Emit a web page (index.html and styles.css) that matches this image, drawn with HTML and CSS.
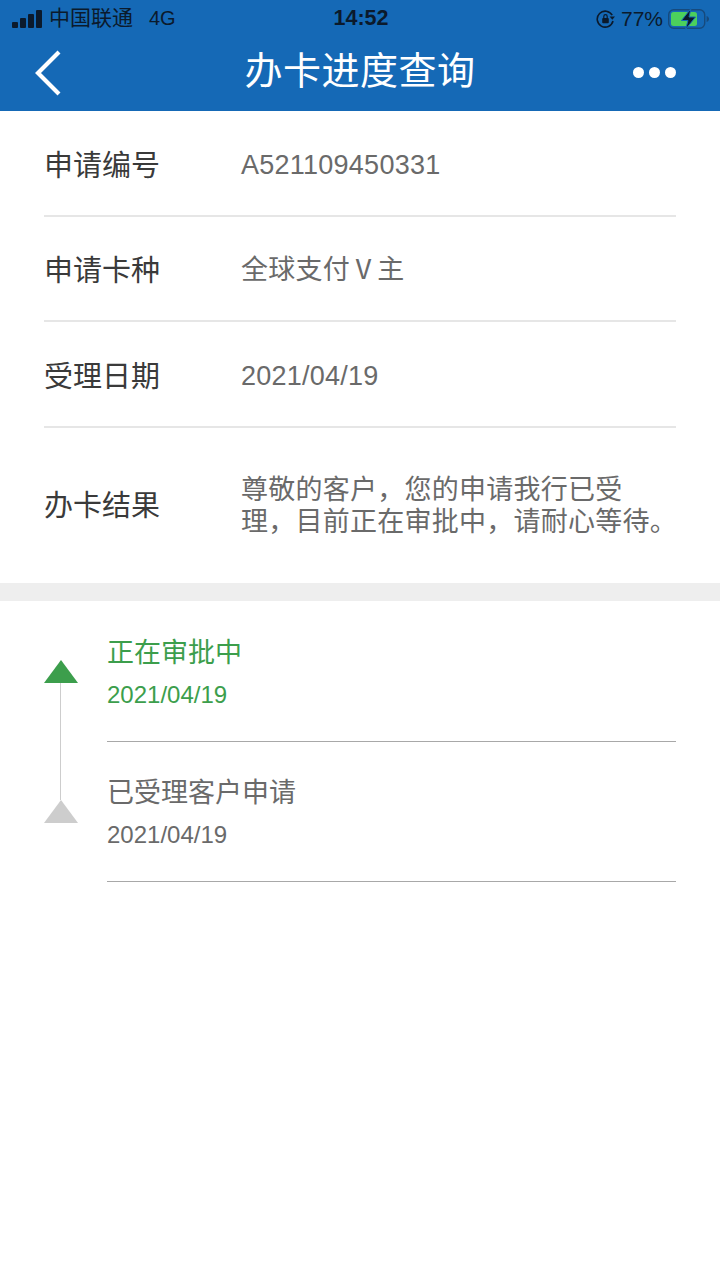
FILE: index.html
```html
<!DOCTYPE html>
<html lang="zh-CN">
<head>
  <meta charset="UTF-8">
  <title>办卡进度查询</title>
  <link rel="stylesheet" href="styles.css">
</head>
<body>

  <header class="topbar">
    <div class="status">
      <div class="status-left">
        <span class="signal"><i></i><i></i><i></i><i></i></span>
        <span class="carrier">中国联通</span>
        <span class="network">4G</span>
      </div>
      <div class="status-time">14:52</div>
      <div class="status-right">
        <svg class="lock-icon" width="20" height="20" viewBox="0 0 20 20">
          <path d="M16.2 6.2A8 8 0 1 0 17 12" fill="none" stroke="#0b1a2c" stroke-width="1.6"/>
          <path d="M13.6 7.4h5.4l-2.7 3.4z" fill="#0b1a2c"/>
          <rect x="6.2" y="9" width="6.6" height="5.2" rx="1" fill="#0b1a2c"/>
          <path d="M7.8 9V7.4a1.7 1.7 0 0 1 3.4 0V9" fill="none" stroke="#0b1a2c" stroke-width="1.2"/>
        </svg>
        <span class="percent">77%</span>
        <svg class="battery" width="42" height="22" viewBox="0 0 42 22">
          <rect x="0.7" y="1.7" width="36" height="18.6" rx="5" fill="none" stroke="#164a7d" stroke-width="1.4"/>
          <rect x="3" y="4" width="26" height="14" rx="2.5" fill="#4cd05c"/>
          <path d="M38.6 8v6c1.6-.6 2.4-1.6 2.4-3s-.8-2.400-2.400-3z" fill="#164a7d"/>
          <path d="M23 0.500 13.500 12.500h6.500l-2.500 9 10-12.500h-6.500z" fill="#0b1a2c" stroke="#1569b6" stroke-width="1"/>
        </svg>
      </div>
    </div>
    <nav class="navbar">
      <svg class="back-icon" width="30" height="48" viewBox="0 0 30 48">
        <path d="M26 3 5 24l21 21" fill="none" stroke="#fff" stroke-width="4.200"/>
      </svg>
      <h1>办卡进度查询</h1>
      <div class="more"><i></i><i></i><i></i></div>
    </nav>
  </header>

  <section class="info">
    <div class="info-row">
      <div class="info-label">申请编号</div>
      <div class="info-value">A521109450331</div>
    </div>
    <div class="info-row">
      <div class="info-label">申请卡种</div>
      <div class="info-value">全球支付Ⅴ主</div>
    </div>
    <div class="info-row">
      <div class="info-label">受理日期</div>
      <div class="info-value">2021/04/19</div>
    </div>
    <div class="info-row info-row-result">
      <div class="info-label">办卡结果</div>
      <div class="info-value">尊敬的客户，您的申请我行已受<br>理，目前正在审批中，请耐心等待。</div>
    </div>
  </section>

  <div class="band"></div>

  <section class="timeline">
    <div class="rail">
      <span class="arrow arrow-green"></span>
      <span class="rail-line"></span>
      <span class="arrow arrow-grey"></span>
    </div>
    <div class="steps">
      <div class="step step-current">
        <div class="step-title">正在审批中</div>
        <div class="step-date">2021/04/19</div>
      </div>
      <div class="step">
        <div class="step-title">已受理客户申请</div>
        <div class="step-date">2021/04/19</div>
      </div>
    </div>
  </section>

</body>
</html>
```

FILE: styles.css
```css
body {
  margin: 0;
  background: #fff;
  font-family: "Liberation Sans", "Noto Sans CJK SC", sans-serif;
  color: #6a6a6a;
}

.topbar {
  height: 111px;
  background-color: #1569b6;
}

.status {
  display: flex;
  align-items: center;
  justify-content: space-between;
  height: 37px;
  padding: 0 10px 0 12px;
  color: #0b1a2c;
}

.status-left,
.status-right {
  display: flex;
  align-items: center;
  width: 200px;
}

.status-right {
  justify-content: flex-end;
}

.signal {
  display: flex;
  align-items: flex-end;
  gap: 2px;
  height: 18px;
  margin-right: 7px;
}

.signal i {
  width: 6px;
  background: #0b1a2c;
  border-radius: 1px;
}

.signal i:nth-child(1) { height: 6px; }
.signal i:nth-child(2) { height: 10px; }
.signal i:nth-child(3) { height: 14px; }
.signal i:nth-child(4) { height: 18px; }

.carrier {
  margin-bottom: 5px;
  font-size: 21px;
}

.network {
  margin-left: 16px;
  font-size: 20px;
}

.status-time {
  font-size: 21.5px;
  font-weight: bold;
}

.percent {
  margin: 0 5px 0 5px;
  font-size: 21px;
}

.navbar {
  position: relative;
  display: flex;
  align-items: center;
  justify-content: center;
  height: 74px;
  padding-bottom: 14px;
  box-sizing: border-box;
}

.navbar h1 {
  margin: 0;
  color: #fff;
  font-size: 38px;
  font-weight: 400;
  letter-spacing: 0.5px;
}

.back-icon {
  position: absolute;
  left: 33px;
  top: 12px;
}

.more {
  position: absolute;
  right: 44px;
  top: 30px;
  display: flex;
  gap: 5px;
}

.more i {
  width: 11px;
  height: 11px;
  background: #fff;
  border-radius: 50%;
}

.info {
  padding: 0 44px;
}

.info-row {
  display: flex;
  align-items: center;
  height: 103.5px;
  border-bottom: 2px solid #e6e6e6;
}

.info-row-result {
  height: 155.5px;
  border-bottom: none;
}

.info-label {
  width: 197px;
  flex-shrink: 0;
  color: #3a3a3a;
  font-size: 29px;
}

.info-row-result .info-label {
  margin-bottom: 4px;
}

.info-value {
  padding-top: 4px;
  font-size: 27px;
  line-height: 32px;
  letter-spacing: 0.25px;
  white-space: nowrap;
}

.info-row-result .info-value {
  margin-top: -2px;
}

.band {
  height: 18px;
  background: #eee;
}

.timeline {
  display: flex;
  padding-left: 44px;
  padding-right: 44px;
}

.rail {
  display: flex;
  flex-direction: column;
  align-items: center;
  flex-shrink: 0;
  width: 33px;
  margin-right: 30px;
  padding-top: 59px;
}

.arrow {
  width: 0;
  height: 0;
  border-left: 17px solid transparent;
  border-right: 17px solid transparent;
  border-bottom-width: 23px;
  border-bottom-style: solid;
}

.arrow-green {
  border-bottom-color: #3c9e4c;
}

.arrow-grey {
  border-bottom-color: #cdcdcd;
}

.rail-line {
  width: 1px;
  height: 117px;
  background: #cdcdcd;
}

.steps {
  flex: 1;
  padding-top: 1px;
}

.step {
  height: 139px;
  border-bottom: 1px solid #a8a8a8;
}

.step-title {
  padding-top: 31px;
  font-size: 27px;
  line-height: 40px;
}

.step-date {
  margin-top: 6px;
  font-size: 24px;
  line-height: 32px;
}

.step-current {
  color: #3c9e4c;
}
```
